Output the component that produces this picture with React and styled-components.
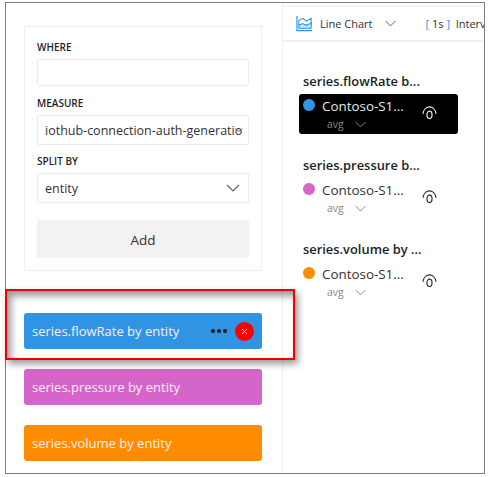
import React from "react";
import styled, { createGlobalStyle } from "styled-components";

const FONT = '"Open Sans", "Noto Sans", sans-serif';

const GlobalStyle = createGlobalStyle`
  html, body {
    margin: 0;
    padding: 0;
    background: #fff;
    font-family: ${FONT};
  }
`;

const Page = styled.div`
  width: 488px;
  height: 477px;
  padding: 2px 3px 3px 5px;
  box-sizing: border-box;
  position: relative;
  overflow: hidden;
`;

const Frame = styled.div`
  height: 100%;
  box-sizing: border-box;
  border: 1px solid #7f7f7f;
  display: flex;
  overflow: hidden;
`;

const LeftPane = styled.div`
  width: 277px;
  flex: none;
  box-sizing: border-box;
  padding: 23px 20px 0 18px;
  border-right: 1px solid #efefef;
  display: flex;
  flex-direction: column;
`;

const QueryCard = styled.div`
  box-sizing: border-box;
  height: 245px;
  border: 1px solid #eeeeee;
  padding: 13px 12px 12px;
  display: flex;
  flex-direction: column;
`;

const FieldLabel = styled.div`
  font-size: 10px;
  line-height: 14px;
  font-weight: 600;
  color: #252423;
  margin: ${({ $top }) => $top || 0}px 0 5px;
`;

const Field = styled.div`
  height: ${({ $height }) => $height}px;
  box-sizing: border-box;
  border: 1px solid #edebe9;
  border-radius: 2px;
  padding: 0 7px;
  display: flex;
  align-items: center;
  justify-content: space-between;
  position: relative;
  font-size: 12.5px;
  color: #323130;
  white-space: nowrap;
`;

const OverlayChevron = styled.svg`
  position: absolute;
  right: 5px;
  top: 10px;
`;

const AddButton = styled.div`
  height: 38px;
  margin-top: 17px;
  padding-top: 2px;
  box-sizing: border-box;
  background: #f3f2f1;
  border-radius: 2px;
  display: flex;
  align-items: center;
  justify-content: center;
  font-size: 13.5px;
  color: #323130;
`;

const SeriesList = styled.div`
  margin-top: 42px;
  display: flex;
  flex-direction: column;
  gap: 20px;
`;

const SeriesBar = styled.div`
  height: 36px;
  box-sizing: border-box;
  border-radius: 3px;
  background: ${({ $color }) => $color};
  color: #fbeef5;
  font-size: 13px;
  padding: 0 8px;
  display: flex;
  align-items: center;
  justify-content: space-between;
`;

const BarActions = styled.div`
  display: flex;
  align-items: center;
  gap: 8px;
`;

const Dots = styled.div`
  display: flex;
  gap: 2px;
`;

const Dot = styled.span`
  width: 4px;
  height: 4px;
  border-radius: 50%;
  background: #101820;
`;

const CloseBadge = styled.div`
  width: 19px;
  height: 19px;
  border-radius: 50%;
  background: #ff0000;
  display: flex;
  align-items: center;
  justify-content: center;
`;

const RightPane = styled.div`
  flex: 1;
  min-width: 0;
  display: flex;
  flex-direction: column;
`;

const Toolbar = styled.div`
  height: 37px;
  flex: none;
  margin-top: 2px;
  box-sizing: border-box;
  border-top: 2px solid #f4f4f4;
  border-bottom: 2px solid #f1f1f1;
  padding: 0 0 0 13px;
  display: flex;
  align-items: center;
  font-size: 11px;
  color: #323130;
  white-space: nowrap;
  overflow: hidden;

  & > * {
    flex: none;
  }
`;

const ChartType = styled.span`
  margin-left: 7px;
`;

const ToolbarChevron = styled.svg`
  margin-left: 11px;
`;

const Bracket = styled.span`
  color: #2f8ee5;
`;

const IntervalGroup = styled.span`
  margin-left: 29px;
`;

const Legend = styled.div`
  padding: 31px 0 0 16px;
  display: flex;
  flex-direction: column;
  gap: 23px;
`;

const LegendGroup = styled.div`
  display: flex;
  flex-direction: column;
`;

const LegendTitle = styled.div`
  font-size: 12.9px;
  line-height: 16px;
  font-weight: 600;
  color: #201f1e;
  margin-left: 4px;
  margin-bottom: 5px;
  white-space: nowrap;
`;

const LegendRow = styled.div`
  width: 159px;
  height: 40px;
  box-sizing: border-box;
  border-radius: 3px;
  padding: 2px 8px 0 4px;
  background: ${({ $active }) => ($active ? "#000" : "transparent")};
  color: ${({ $active }) => ($active ? "#e8e8e8" : "#323130")};
  display: flex;
  align-items: flex-start;
`;

const ColorDot = styled.span`
  width: 12px;
  height: 12px;
  border-radius: 50%;
  flex: none;
  margin-top: 3px;
  background: ${({ $color }) => $color};
`;

const LegendText = styled.div`
  margin-left: 7px;
  width: 100px;
  flex: none;
  display: flex;
  flex-direction: column;
`;

const EntityName = styled.div`
  font-size: 13.4px;
  line-height: 20px;
  white-space: nowrap;
`;

const AggRow = styled.div`
  display: flex;
  align-items: center;
  gap: 10px;
  margin: 2px 0 0 5px;
  font-size: 10.5px;
  line-height: 13px;
  color: #8a8886;
`;

const EyeIcon = styled.svg`
  margin-top: 9px;
  flex: none;
`;

const Highlight = styled.div`
  position: absolute;
  left: 5px;
  top: 289px;
  width: 290px;
  height: 71px;
  box-sizing: border-box;
  border: 2px solid #f00000;
  box-shadow: 3px 4px 7px rgba(0, 0, 0, 0.4), inset 4px 5px 7px rgba(0, 0, 0, 0.4);
  pointer-events: none;
`;

const Chevron = ({ size = 16, color = "#605e5c", ...rest }) => (
  <svg width={size} height={size} viewBox="0 0 16 16" fill="none" {...rest}>
    <path d="M2 5l6 6 6-6" stroke={color} strokeWidth="1.2" />
  </svg>
);

const LineChartIcon = () => (
  <svg width="17" height="17" viewBox="0 0 18 18" fill="none">
    <path d="M1 1v15.500h16" stroke="#2f8ee5" strokeWidth="1.2" />
    <path d="M3 6l4-2.500 4 3 5-3v7H3z" stroke="#2f8ee5" strokeWidth="1.1" />
    <path d="M3 11l4-2 4 2 5-2.500V14H3z" stroke="#2f8ee5" strokeWidth="1.1" fill="#cfe5fa" />
  </svg>
);

const Eye = ({ color }) => (
  <EyeIcon width="15" height="15" viewBox="0 0 16 16" fill="none">
    <path d="M1 9.500C1.500 5 4.500 2 8 2s6.500 3 7 7.500" stroke={color} strokeWidth="1.2" />
    <ellipse cx="8" cy="10.500" rx="2.700" ry="4" stroke={color} strokeWidth="1.3" />
  </EyeIcon>
);

const SERIES = [
  { name: "series.flowRate by entity", color: "#3194e3", active: true, legend: "series.flowRate b..." },
  { name: "series.pressure by entity", color: "#d565c8", legend: "series.pressure b..." },
  { name: "series.volume by entity", color: "#ff8c00", legend: "series.volume by ..." },
];

const App = () => (
  <Page>
    <GlobalStyle />
    <Frame>
      <LeftPane>
        <QueryCard>
          <FieldLabel>WHERE</FieldLabel>
          <Field $height={27} />
          <FieldLabel $top={10}>MEASURE</FieldLabel>
          <Field $height={30}>
            iothub-connection-auth-generatio
            <OverlayChevron width="8" height="8" viewBox="0 0 16 16" fill="none">
              <path d="M2 5l6 6 6-6" stroke="#605e5c" strokeWidth="2" />
            </OverlayChevron>
          </Field>
          <FieldLabel $top={9}>SPLIT BY</FieldLabel>
          <Field $height={30}>
            entity
            <Chevron size={16} />
          </Field>
          <AddButton>Add</AddButton>
        </QueryCard>
        <SeriesList>
          {SERIES.map((s) => (
            <SeriesBar key={s.name} $color={s.color}>
              {s.name}
              {s.active && (
                <BarActions>
                  <Dots>
                    <Dot />
                    <Dot />
                    <Dot />
                  </Dots>
                  <CloseBadge>
                    <svg width="7" height="7" viewBox="0 0 7 7">
                      <path d="M1 1l5 5M6 1l-5 5" stroke="#fff" strokeWidth="1" />
                    </svg>
                  </CloseBadge>
                </BarActions>
              )}
            </SeriesBar>
          ))}
        </SeriesList>
      </LeftPane>
      <RightPane>
        <Toolbar>
          <LineChartIcon />
          <ChartType>Line Chart</ChartType>
          <ToolbarChevron as={Chevron} size={13} />
          <IntervalGroup>
            <Bracket>[</Bracket> 1s <Bracket>]</Bracket>&nbsp; Interval
          </IntervalGroup>
        </Toolbar>
        <Legend>
          {SERIES.map((s) => (
            <LegendGroup key={s.legend}>
              <LegendTitle>{s.legend}</LegendTitle>
              <LegendRow $active={s.active}>
                <ColorDot $color={s.color} />
                <LegendText>
                  <EntityName>Contoso-S1...</EntityName>
                  <AggRow>
                    avg
                    <Chevron size={13} color="#8a8886" />
                  </AggRow>
                </LegendText>
                <Eye color={s.active ? "#e8e8e8" : "#323130"} />
              </LegendRow>
            </LegendGroup>
          ))}
        </Legend>
      </RightPane>
    </Frame>
    <Highlight />
  </Page>
);

export default App;
